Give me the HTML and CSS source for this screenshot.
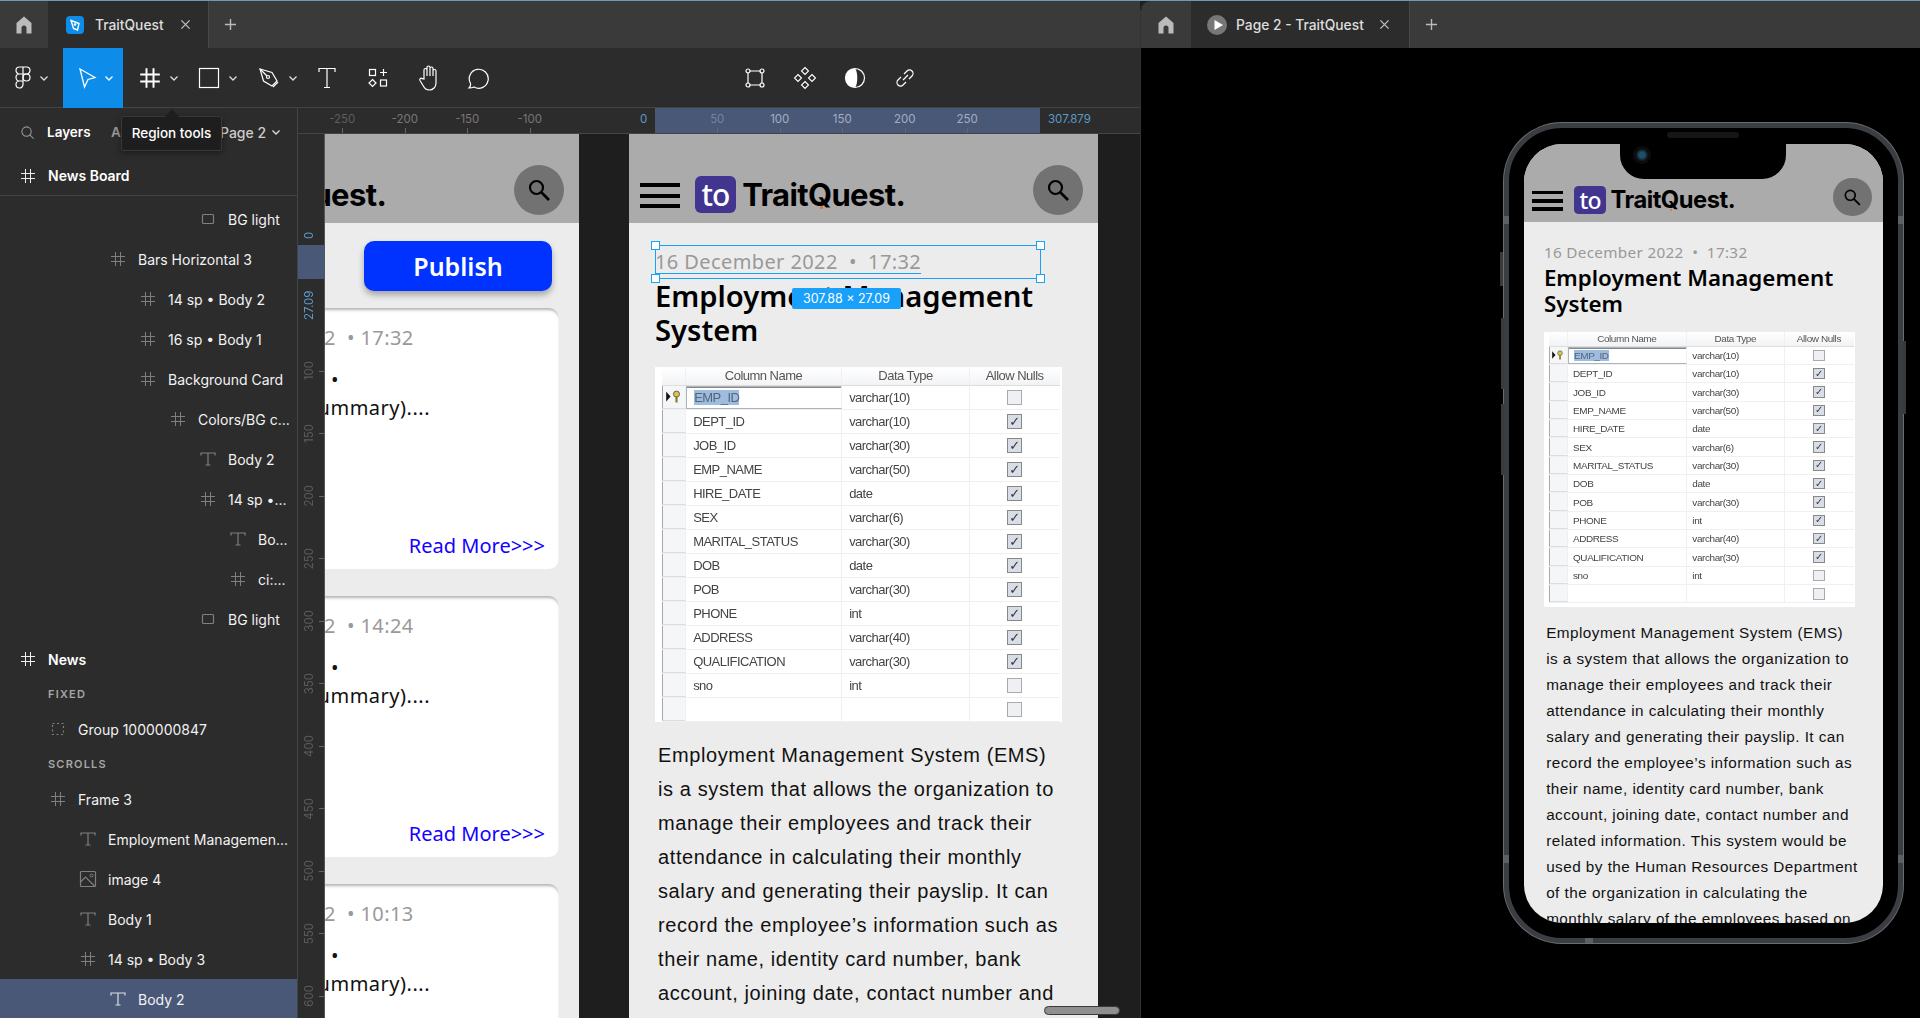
FILE: index.html
```html
<!DOCTYPE html>
<html lang="en">
<head>
  <meta charset="UTF-8" />
  <title>TraitQuest</title>
  <link rel="stylesheet" href="styles.css">
</head>
<body>
  <svg class="sprite" xmlns="http://www.w3.org/2000/svg">
    <symbol id="i-home" viewBox="0 0 20 20"><path fill="currentColor" d="M10 1.5 17.5 8v10.5h-5V13a2.5 2.5 0 0 0-5 0v5.5h-5V8z"/></symbol>
    <symbol id="i-frame" viewBox="0 0 20 20"><path fill="none" stroke="currentColor" d="M7.5 3v14M12.5 3v14M3 7.5h14M3 12.5h14"/></symbol>
    <symbol id="i-rect" viewBox="0 0 20 20"><rect x="4.5" y="5.5" width="11" height="9" rx="1" fill="none" stroke="currentColor" stroke-width="1.2"/></symbol>
    <symbol id="i-text" viewBox="0 0 20 20"><path fill="none" stroke="currentColor" stroke-width="1.2" d="M3 6.5V4h14v2.5M10 4v12M7.5 16h5"/></symbol>
    <symbol id="i-image" viewBox="0 0 20 20"><rect x="2.5" y="2.5" width="15" height="15" rx="1" fill="none" stroke="currentColor" stroke-width="1.2"/><path fill="none" stroke="currentColor" stroke-width="1.2" d="m2.5 13 5-5 9 9"/><circle cx="13.5" cy="6.5" r="1.5" fill="none" stroke="currentColor"/></symbol>
    <symbol id="i-group" viewBox="0 0 20 20"><rect x="4.5" y="4.5" width="11" height="11" fill="none" stroke="currentColor" stroke-width="1.2" stroke-dasharray="2 2.5"/></symbol>
    <symbol id="i-chev" viewBox="0 0 10 10"><path fill="none" stroke="currentColor" stroke-width="1.3" d="m1.5 3.5 3.5 3.5 3.5-3.5"/></symbol>
    <symbol id="i-close" viewBox="0 0 12 12"><path fill="none" stroke="currentColor" stroke-width="1.5" d="m1.5 1.5 9 9M10.5 1.5l-9 9"/></symbol>
    <symbol id="i-plus" viewBox="0 0 14 14"><path fill="none" stroke="currentColor" stroke-width="1.5" d="M7 1v12M1 7h12"/></symbol>
    <symbol id="i-search" viewBox="0 0 24 24"><circle cx="9.5" cy="9.5" r="6.5" fill="none" stroke="currentColor" stroke-width="2.2"/><path fill="none" stroke="currentColor" stroke-width="2.6" d="m14.5 14.5 7.5 7.5"/></symbol>
    <symbol id="i-key" viewBox="0 0 14 12"><path fill="#111" d="M0 1.5 4 6l-4 4.5z"/><circle cx="9.5" cy="3.8" r="2.8" fill="#d9c64a" stroke="#555" stroke-width=".8"/><path stroke="#8a7a20" stroke-width="2" d="M9.5 6v5.5"/></symbol>
  </svg>

  <main class="editor">
    <div class="tabbar">
      <div class="tab-home"><svg class="ic-home"><use href="#i-home"/></svg></div>
      <div class="tab tab-file">
        <span class="file-badge">
          <svg viewBox="0 0 18 18" width="18" height="18"><path fill="none" stroke="#fff" stroke-width="1.4" d="m5 4.5 8 3-1.5 6.500-4-1.500z"/><circle cx="9" cy="8.5" r="1.3" fill="#fff"/></svg>
        </span>
        <span class="tab-label">TraitQuest</span>
        <svg class="ic-close"><use href="#i-close"/></svg>
      </div>
      <svg class="ic-plus"><use href="#i-plus"/></svg>
    </div>

    <div class="toolbar">
      <div class="tool tool-menu">
        <svg width="22" height="26" viewBox="0 0 22 26" fill="none" stroke="#fff" stroke-width="1.2"><path d="M7.5 2h7a3.5 3.5 0 0 1 0 7h-7a3.5 3.5 0 0 1 0-7zM7.5 9H11v7H7.5a3.5 3.5 0 0 1 0-7zM7.5 16H11v3.5A3.5 3.5 0 1 1 7.5 16z"/><circle cx="14.5" cy="12.5" r="3.5"/><path d="M11 2v7"/></svg>
        <svg class="ic-chev"><use href="#i-chev"/></svg>
      </div>
      <div class="tool tool-select">
        <svg width="20" height="24" viewBox="0 0 20 24"><path fill="none" stroke="#fff" stroke-width="1.3" d="M3 3 18 11.5 11 13.5 7.5 21z"/></svg>
        <svg class="ic-chev"><use href="#i-chev"/></svg>
      </div>
      <div class="tool tool-frame">
        <svg width="28" height="28" class="white ic-frame-lg"><use href="#i-frame"/></svg>
        <svg class="ic-chev"><use href="#i-chev"/></svg>
      </div>
      <div class="tool tool-rect">
        <svg width="24" height="24" viewBox="0 0 24 24"><rect x="2.5" y="2.5" width="19" height="19" fill="none" stroke="#fff" stroke-width="1.2"/></svg>
        <svg class="ic-chev"><use href="#i-chev"/></svg>
      </div>
      <div class="tool tool-pen">
        <svg width="24" height="24" viewBox="0 0 24 24" fill="none" stroke="#fff" stroke-width="1.2"><path d="M3 3 15 6.5 20 15 15 20 6.5 15z"/><path d="M3 3 10 10"/><circle cx="11" cy="11" r="1.5"/><path d="m16 21 5-5"/></svg>
        <svg class="ic-chev"><use href="#i-chev"/></svg>
      </div>
      <div class="tool tool-type">
        <svg width="18" height="22" viewBox="0 0 18 22" fill="none" stroke="#fff" stroke-width="1.2"><path d="M1 5V1.5h16V5M9 1.5v19M6 20.5h6"/></svg>
      </div>
      <div class="tool tool-res">
        <svg width="22" height="24" viewBox="0 0 22 24" fill="none" stroke="#fff" stroke-width="1.2"><rect x="2.5" y="3.5" width="6" height="6"/><path d="M16.5 3v7M13 6.5h7"/><path d="m5.5 13.5 3.5 3.5-3.5 3.5L2 17z"/><rect x="13.5" y="14" width="6" height="6"/></svg>
      </div>
      <div class="tool tool-hand">
        <svg width="24" height="28" viewBox="0 0 24 28" fill="none" stroke="#fff" stroke-width="1.2"><path d="M7 15V6a1.5 1.5 0 0 1 3 0v6V3.5a1.5 1.5 0 0 1 3 0V12V4.5a1.5 1.5 0 0 1 3 0V12V7a1.5 1.5 0 0 1 3 0v12c0 4-3 7-6.5 7S8 25 6 21.5L3 16.5c-.8-1.5 1-3 2.3-1.8z"/></svg>
      </div>
      <div class="tool tool-comment">
        <svg width="24" height="24" viewBox="0 0 24 24"><path fill="none" stroke="#fff" stroke-width="1.2" d="M3 22c1.5-1.5 1.8-3 1.5-4.5A9.5 9.5 0 1 1 8 21c-1.5.8-3 1-5 1z"/></svg>
      </div>

      <div class="tool tool-bounds">
        <svg width="24" height="24" viewBox="0 0 24 24" fill="none" stroke="#fff" stroke-width="1.2"><path d="M5 6.5v11M19 6.5v11M6.5 5h11M6.5 19h11"/><circle cx="5" cy="5" r="2"/><circle cx="19" cy="5" r="2"/><circle cx="5" cy="19" r="2"/><circle cx="19" cy="19" r="2"/></svg>
      </div>
      <div class="tool tool-comp">
        <svg width="24" height="24" viewBox="0 0 24 24" fill="none" stroke="#fff" stroke-width="1.1"><path d="m12 1.5 3.5 3.5-3.5 3.5L8.5 5zM5 8.5 8.5 12 5 15.5 1.5 12zM19 8.5l3.5 3.5-3.5 3.5-3.5-3.5zM12 15.5l3.5 3.5-3.5 3.5L8.5 19z"/></svg>
      </div>
      <div class="tool tool-mask">
        <svg width="24" height="24" viewBox="0 0 24 24"><circle cx="12" cy="12" r="9.5" fill="none" stroke="#fff" stroke-width="1.2"/><path fill="#fff" d="M12 2.5a9.5 9.5 0 0 0 0 19c3-3 3-16 0-19z"/></svg>
      </div>
      <div class="tool tool-link">
        <svg width="22" height="22" viewBox="0 0 22 22" fill="none" stroke="#fff" stroke-width="1.2"><path d="m9 13 5-5M7 10l-3 3a3.5 3.5 0 0 0 5 5l3-3M15 12l3-3a3.5 3.5 0 0 0-5-5l-3 3"/></svg>
      </div>
    </div>

    <div class="workspace">
      <aside class="layers">
        <div class="panel-tabs">
          <svg class="panel-search" viewBox="0 0 16 16"><circle cx="7" cy="7" r="5" fill="none" stroke="currentColor" stroke-width="1.1"/><path stroke="currentColor" stroke-width="1.1" d="m10.5 10.5 4 4"/></svg>
          <b class="panel-tab">Layers</b>
          <span class="panel-tab panel-assets">Assets</span>
          <span class="panel-page">Page 2</span>
          <svg class="ic-chev"><use href="#i-chev"/></svg>
        </div>
        <div class="row row-pinned lvl-0 strong"><svg class="row-icon"><use href="#i-frame"/></svg>News Board</div>
        <ul class="tree">
          <li class="row lvl-6"><svg class="row-icon"><use href="#i-rect"/></svg>BG light</li>
          <li class="row lvl-3"><svg class="row-icon"><use href="#i-frame"/></svg>Bars Horizontal 3</li>
          <li class="row lvl-4"><svg class="row-icon"><use href="#i-frame"/></svg>14 sp • Body 2</li>
          <li class="row lvl-4"><svg class="row-icon"><use href="#i-frame"/></svg>16 sp • Body 1</li>
          <li class="row lvl-4"><svg class="row-icon"><use href="#i-frame"/></svg>Background Card</li>
          <li class="row lvl-5"><svg class="row-icon"><use href="#i-frame"/></svg>Colors/BG c...</li>
          <li class="row lvl-6"><svg class="row-icon"><use href="#i-text"/></svg>Body 2</li>
          <li class="row lvl-6"><svg class="row-icon"><use href="#i-frame"/></svg>14 sp •...</li>
          <li class="row lvl-7"><svg class="row-icon"><use href="#i-text"/></svg>Bo...</li>
          <li class="row lvl-7"><svg class="row-icon"><use href="#i-frame"/></svg>ci:...</li>
          <li class="row lvl-6"><svg class="row-icon"><use href="#i-rect"/></svg>BG light</li>
          <li class="row lvl-0 strong"><svg class="row-icon"><use href="#i-frame"/></svg>News</li>
          <li class="tree-head">FIXED</li>
          <li class="row lvl-1"><svg class="row-icon"><use href="#i-group"/></svg>Group 1000000847</li>
          <li class="tree-head">SCROLLS</li>
          <li class="row lvl-1"><svg class="row-icon"><use href="#i-frame"/></svg>Frame 3</li>
          <li class="row lvl-2"><svg class="row-icon"><use href="#i-text"/></svg>Employment Managemen...</li>
          <li class="row lvl-2"><svg class="row-icon"><use href="#i-image"/></svg>image 4</li>
          <li class="row lvl-2"><svg class="row-icon"><use href="#i-text"/></svg>Body 1</li>
          <li class="row lvl-2"><svg class="row-icon"><use href="#i-frame"/></svg>14 sp • Body 3</li>
          <li class="row lvl-3 selected"><svg class="row-icon"><use href="#i-text"/></svg>Body 2</li>
        </ul>
        <div class="tooltip">Region tools</div>
      </aside>

      <section class="stage">
        <div class="ruler-top">
          <span class="ruler-span"></span>
          <span class="ruler-start">0</span>
          <span class="ruler-end">307.879</span>
          <div class="tick-row">
            <span class="tick dim">-250</span><span class="tick">-200</span><span class="tick">-150</span><span class="tick">-100</span><span class="tick"></span><span class="tick"></span>
            <span class="tick on-span faint">50</span><span class="tick on-span">100</span><span class="tick on-span">150</span><span class="tick on-span">200</span><span class="tick on-span">250</span>
          </div>
        </div>
        <div class="stage-body">
          <div class="ruler-left">
            <span class="ruler-span-v"></span>
            <span class="v-start">0</span>
            <span class="v-end">27.09</span>
            <div class="tick-col">
              <span class="vtick"><i>100</i></span><span class="vtick"><i>150</i></span><span class="vtick"><i>200</i></span><span class="vtick"><i>250</i></span><span class="vtick"><i>300</i></span><span class="vtick"><i>350</i></span><span class="vtick"><i>400</i></span><span class="vtick"><i>450</i></span><span class="vtick"><i>500</i></span><span class="vtick"><i>550</i></span><span class="vtick"><i>600</i></span>
            </div>
          </div>

          <div class="canvas">
            <!-- News Board frame -->
            <div class="news frame-board">
              <header class="news-head">
                <span class="burger"><i></i><i></i><i></i></span>
                <span class="logo"><b>to</b></span>
                <span class="wordmark">TraitQuest.</span>
                <span class="search-btn"><svg><use href="#i-search"/></svg></span>
              </header>
              <div class="board">
                <button class="publish">Publish</button>
                <article class="card">
                  <p class="card-date">16 December 2022 &nbsp;•&nbsp;17:32</p>
                  <p class="card-line">Employee System •</p>
                  <p class="card-line card-sum">(Short summary)....</p>
                  <a class="read-more">Read More&gt;&gt;&gt;</a>
                </article>
                <article class="card">
                  <p class="card-date">16 December 2022 &nbsp;•&nbsp;14:24</p>
                  <p class="card-line">Employee System •</p>
                  <p class="card-line card-sum">(Short summary)....</p>
                  <a class="read-more">Read More&gt;&gt;&gt;</a>
                </article>
                <article class="card">
                  <p class="card-date">16 December 2022 &nbsp;•&nbsp;10:13</p>
                  <p class="card-line">Employee System •</p>
                  <p class="card-line card-sum">(Short summary)....</p>
                  <a class="read-more">Read More&gt;&gt;&gt;</a>
                </article>
              </div>
            </div>

            <!-- News frame -->
            <div class="news frame-news">
              <header class="news-head">
                <span class="burger"><i></i><i></i><i></i></span>
                <span class="logo"><b>to</b></span>
                <span class="wordmark">TraitQuest.</span>
                <span class="search-btn"><svg><use href="#i-search"/></svg></span>
              </header>
              <div class="article">
                <p class="date"><span class="hovered">16 December 2022 &nbsp;•&nbsp; 17:32</span></p>
                <h1 class="title">Employment Management System</h1>
                <div class="shot">
                  <div class="shot-row shot-head"><span></span><span class="c-name">Column Name</span><span class="c-type">Data Type</span><span class="c-null">Allow Nulls</span></div>
                  <div class="shot-row"><span class="gutter"><svg class="key"><use href="#i-key"/></svg></span><span class="c-name active"><mark>EMP_ID</mark></span><span>varchar(10)</span><span class="c-null"><i class="ck"></i></span></div>
                  <div class="shot-row"><span class="gutter"></span><span class="c-name">DEPT_ID</span><span>varchar(10)</span><span class="c-null"><i class="ck on"></i></span></div>
                  <div class="shot-row"><span class="gutter"></span><span class="c-name">JOB_ID</span><span>varchar(30)</span><span class="c-null"><i class="ck on"></i></span></div>
                  <div class="shot-row"><span class="gutter"></span><span class="c-name">EMP_NAME</span><span>varchar(50)</span><span class="c-null"><i class="ck on"></i></span></div>
                  <div class="shot-row"><span class="gutter"></span><span class="c-name">HIRE_DATE</span><span>date</span><span class="c-null"><i class="ck on"></i></span></div>
                  <div class="shot-row"><span class="gutter"></span><span class="c-name">SEX</span><span>varchar(6)</span><span class="c-null"><i class="ck on"></i></span></div>
                  <div class="shot-row"><span class="gutter"></span><span class="c-name">MARITAL_STATUS</span><span>varchar(30)</span><span class="c-null"><i class="ck on"></i></span></div>
                  <div class="shot-row"><span class="gutter"></span><span class="c-name">DOB</span><span>date</span><span class="c-null"><i class="ck on"></i></span></div>
                  <div class="shot-row"><span class="gutter"></span><span class="c-name">POB</span><span>varchar(30)</span><span class="c-null"><i class="ck on"></i></span></div>
                  <div class="shot-row"><span class="gutter"></span><span class="c-name">PHONE</span><span>int</span><span class="c-null"><i class="ck on"></i></span></div>
                  <div class="shot-row"><span class="gutter"></span><span class="c-name">ADDRESS</span><span>varchar(40)</span><span class="c-null"><i class="ck on"></i></span></div>
                  <div class="shot-row"><span class="gutter"></span><span class="c-name">QUALIFICATION</span><span>varchar(30)</span><span class="c-null"><i class="ck on"></i></span></div>
                  <div class="shot-row"><span class="gutter"></span><span class="c-name">sno</span><span>int</span><span class="c-null"><i class="ck"></i></span></div>
                  <div class="shot-row"><span class="gutter"></span><span class="c-name"></span><span></span><span class="c-null"><i class="ck"></i></span></div>
                </div>
                <p class="copy">Employment Management System (EMS) is a system that allows the organization to manage their employees and track their attendance in calculating their monthly salary and generating their payslip. It can record the employee’s information such as their name, identity card number, bank account, joining date, contact number and related information. This system would be used by the Human Resources Department of the organization in calculating the monthly salary of the employees based on their attendance.</p>
              </div>
            </div>

            <!-- selection on the canvas -->
            <div class="selection">
              <i class="handle tl"></i><i class="handle tr"></i><i class="handle bl"></i><i class="handle br"></i>
              <span class="size-tag">307.88 × 27.09</span>
            </div>
            <div class="scroll-thumb"></div>
          </div>
        </div>
      </section>
    </div>
  </main>

  <main class="preview">
    <div class="tabbar">
      <div class="tab-home"><svg class="ic-home"><use href="#i-home"/></svg></div>
      <div class="tab tab-proto">
        <span class="play"><svg viewBox="0 0 10 10" width="10" height="10"><path fill="#fff" d="M1.5 0 10 5l-8.5 5z"/></svg></span>
        <span class="tab-label">Page 2 - TraitQuest</span>
        <svg class="ic-close"><use href="#i-close"/></svg>
      </div>
      <svg class="ic-plus"><use href="#i-plus"/></svg>
    </div>

    <div class="preview-body">
      <div class="phone">
        <i class="side-btn s1"></i><i class="side-btn s2"></i><i class="side-btn s3"></i><i class="side-btn s4"></i>
        <i class="band b1"></i><i class="band b2"></i><i class="band b3"></i><i class="band b4"></i><i class="band b5"></i>
        <i class="speaker"></i>
        <div class="screen">
          <div class="notch"><i class="camera"></i></div>
          <div class="news in-phone">
            <header class="news-head">
              <span class="burger"><i></i><i></i><i></i></span>
              <span class="logo"><b>to</b></span>
              <span class="wordmark">TraitQuest.</span>
              <span class="search-btn"><svg><use href="#i-search"/></svg></span>
            </header>
            <div class="article">
              <p class="date">16 December 2022 &nbsp;•&nbsp; 17:32</p>
              <h1 class="title">Employment Management System</h1>
              <div class="shot">
                <div class="shot-row shot-head"><span></span><span class="c-name">Column Name</span><span class="c-type">Data Type</span><span class="c-null">Allow Nulls</span></div>
                <div class="shot-row"><span class="gutter"><svg class="key"><use href="#i-key"/></svg></span><span class="c-name active"><mark>EMP_ID</mark></span><span>varchar(10)</span><span class="c-null"><i class="ck"></i></span></div>
                <div class="shot-row"><span class="gutter"></span><span class="c-name">DEPT_ID</span><span>varchar(10)</span><span class="c-null"><i class="ck on"></i></span></div>
                <div class="shot-row"><span class="gutter"></span><span class="c-name">JOB_ID</span><span>varchar(30)</span><span class="c-null"><i class="ck on"></i></span></div>
                <div class="shot-row"><span class="gutter"></span><span class="c-name">EMP_NAME</span><span>varchar(50)</span><span class="c-null"><i class="ck on"></i></span></div>
                <div class="shot-row"><span class="gutter"></span><span class="c-name">HIRE_DATE</span><span>date</span><span class="c-null"><i class="ck on"></i></span></div>
                <div class="shot-row"><span class="gutter"></span><span class="c-name">SEX</span><span>varchar(6)</span><span class="c-null"><i class="ck on"></i></span></div>
                <div class="shot-row"><span class="gutter"></span><span class="c-name">MARITAL_STATUS</span><span>varchar(30)</span><span class="c-null"><i class="ck on"></i></span></div>
                <div class="shot-row"><span class="gutter"></span><span class="c-name">DOB</span><span>date</span><span class="c-null"><i class="ck on"></i></span></div>
                <div class="shot-row"><span class="gutter"></span><span class="c-name">POB</span><span>varchar(30)</span><span class="c-null"><i class="ck on"></i></span></div>
                <div class="shot-row"><span class="gutter"></span><span class="c-name">PHONE</span><span>int</span><span class="c-null"><i class="ck on"></i></span></div>
                <div class="shot-row"><span class="gutter"></span><span class="c-name">ADDRESS</span><span>varchar(40)</span><span class="c-null"><i class="ck on"></i></span></div>
                <div class="shot-row"><span class="gutter"></span><span class="c-name">QUALIFICATION</span><span>varchar(30)</span><span class="c-null"><i class="ck on"></i></span></div>
                <div class="shot-row"><span class="gutter"></span><span class="c-name">sno</span><span>int</span><span class="c-null"><i class="ck"></i></span></div>
                <div class="shot-row"><span class="gutter"></span><span class="c-name"></span><span></span><span class="c-null"><i class="ck"></i></span></div>
              </div>
              <p class="copy">Employment Management System (EMS) is a system that allows the organization to manage their employees and track their attendance in calculating their monthly salary and generating their payslip. It can record the employee’s information such as their name, identity card number, bank account, joining date, contact number and related information. This system would be used by the Human Resources Department of the organization in calculating the monthly salary of the employees based on their attendance.</p>
            </div>
          </div>
        </div>
      </div>
    </div>
  </main>
</body>
</html>
```

FILE: styles.css
```css
:root {
  --ui-bg: #2c2c2c;
  --tab-bg: #3a3a3a;
  --line: #444;
  --accent: #0d8ce9;
  --figma-blue: #18a0fb;
  --ruler-span: #4a5878;
  --ruler-blue: #5a9bc8;
  --canvas: #1e1e1e;
  --head-grey: #ababab;
  --page-grey: #ececec;
}

* {
  box-sizing: border-box;
}

html, body {
  height: 100%;
}

body {
  margin: 0;
  display: flex;
  overflow: hidden;
  background: var(--canvas);
  border-top: 1px solid #6a9db5;
  font-family: Inter, 'Liberation Sans', sans-serif;
  font-size: 14px;
  color: #fff;
}

.sprite {
  display: none;
}

p, h1, ul {
  margin: 0;
  padding: 0;
  list-style: none;
}

/* ----- Tabs ----- */
.tabbar {
  display: flex;
  align-items: center;
  height: 47px;
  flex: none;
  background: var(--tab-bg);
}

.tab-home {
  width: 49px;
  height: 100%;
  display: flex;
  align-items: center;
  justify-content: center;
  color: #bbb;
  border-right: 1px solid #2c2c2c;
}

.ic-home {
  width: 20px;
  height: 20px;
}

.tab {
  height: 100%;
  display: flex;
  align-items: center;
  background: var(--ui-bg);
  color: #ddd;
  font-weight: 500;
  font-size: 13.8px;
}

.tab-file {
  width: 160px;
  padding-left: 17px;
  border-right: 1px solid #484848;
}

.file-badge {
  width: 18px;
  height: 18px;
  border-radius: 4px;
  background: var(--accent);
  margin-right: 11px;
}

.tab-file .ic-close {
  margin-left: 16px;
}

.tab-proto {
  width: 218px;
  padding-left: 15px;
  border-right: 1px solid #484848;
}

.tab-proto .ic-close {
  margin-left: 15px;
}

.play {
  width: 20px;
  height: 20px;
  border-radius: 50%;
  background: #777;
  display: flex;
  align-items: center;
  justify-content: center;
  margin-right: 9px;
  padding-left: 1px;
}

.ic-close {
  width: 11px;
  height: 11px;
  color: #bbb;
}

.ic-plus {
  width: 13px;
  height: 13px;
  margin-left: 15px;
  color: #bbb;
}

/* ----- Left window ----- */
.editor {
  width: 1140px;
  flex: none;
  display: flex;
  flex-direction: column;
  height: 100%;
  overflow: hidden;
}

.toolbar {
  height: 60px;
  flex: none;
  display: flex;
  background: var(--ui-bg);
  border-bottom: 1px solid var(--line);
}

.tool {
  display: flex;
  align-items: center;
  justify-content: center;
  gap: 7px;
  height: 60px;
}

.white {
  color: #fff;
}

.ic-chev {
  width: 10px;
  height: 10px;
  color: #ddd;
}

.tool-menu { width: 63px; padding-right: 3px; gap: 5px; }
.tool-select { width: 60px; background: var(--accent); padding-left: 5px; }
.tool-select .ic-chev { color: #fff; }
.tool-frame { width: 65px; padding-left: 13px; justify-content: flex-start; gap: 5px; }
.ic-frame-lg { stroke-width: 1.4; }
.tool-rect { width: 52px; padding-left: 9px; justify-content: flex-start; }
.tool-pen { width: 62px; padding-left: 17px; justify-content: flex-start; }
.tool-type { width: 50px; }
.tool-res { width: 52px; }
.tool-hand { width: 49px; }
.tool-comment { width: 50px; }
.tool-bounds { width: 50px; margin-left: 227px; }
.tool-comp { width: 50px; }
.tool-mask { width: 50px; }
.tool-link { width: 50px; }

.workspace {
  flex: 1;
  display: flex;
  min-height: 0;
}

/* ----- Layers ----- */
.layers {
  width: 298px;
  flex: none;
  position: relative;
  background: var(--ui-bg);
  border-right: 1px solid var(--line);
  overflow: hidden;
  font-size: 14px;
  font-weight: 400;
}

.panel-tabs {
  height: 48px;
  display: flex;
  align-items: center;
  padding-left: 20px;
  color: #aaa;
}

.panel-search {
  width: 15px;
  height: 15px;
  color: #999;
  margin-right: 12px;
}

.panel-tab {
  width: 64px;
  font-size: 13.5px;
  font-weight: 600;
  color: #fff;
}

.panel-assets {
  width: 109px;
  color: #999;
}

.panel-page {
  font-weight: 500;
  color: #ccc;
  margin-right: 5px;
}

.row {
  height: 40px;
  display: flex;
  align-items: center;
  white-space: nowrap;
  color: #f2f2f2;
}

.row-icon {
  width: 20px;
  height: 20px;
  margin-right: 10px;
  flex: none;
  color: #7f7f7f;
}

.strong {
  font-weight: 600;
  color: #fff;
}

.strong .row-icon {
  color: #eee;
}

.row-pinned {
  border-bottom: 1px solid var(--line);
  margin-bottom: 3px;
}

.lvl-0 { padding-left: 18px; }
.lvl-1 { padding-left: 48px; }
.lvl-2 { padding-left: 78px; }
.lvl-3 { padding-left: 108px; }
.lvl-4 { padding-left: 138px; }
.lvl-5 { padding-left: 168px; }
.lvl-6 { padding-left: 198px; }
.lvl-7 { padding-left: 228px; }

.tree-head {
  height: 30px;
  padding-left: 48px;
  display: flex;
  align-items: center;
  font-size: 11px;
  font-weight: 600;
  letter-spacing: 1.2px;
  color: #a5a5a5;
}

.selected {
  background: var(--ruler-span);
}

.selected .row-icon {
  color: #ddd;
}

.tooltip {
  position: absolute;
  left: 121px;
  top: 8px;
  width: 101px;
  height: 35px;
  line-height: 33px;
  text-align: center;
  background: #1e1e1e;
  border: 1px solid #383838;
  border-radius: 2px;
  font-size: 13.5px;
  font-weight: 500;
  box-shadow: 0 2px 6px rgba(0, 0, 0, 0.4);
}

.tooltip::before {
  content: "";
  position: absolute;
  left: 43px;
  top: -8px;
  border: 7px solid transparent;
  border-top: 0;
  border-bottom: 8px solid #1e1e1e;
}

/* ----- Rulers ----- */
.stage {
  flex: 1;
  min-width: 0;
  display: flex;
  flex-direction: column;
}

.ruler-top {
  height: 26px;
  flex: none;
  position: relative;
  background: var(--ui-bg);
  border-bottom: 1px solid var(--line);
}

.ruler-span {
  position: absolute;
  left: 357px;
  top: 0;
  width: 385px;
  height: 25px;
  background: var(--ruler-span);
}

.ruler-start, .ruler-end {
  position: absolute;
  top: 4px;
  font-size: 11.5px;
  color: var(--ruler-blue);
}

.ruler-start { left: 342px; }
.ruler-end { left: 750px; }

.tick-row {
  position: relative;
  display: flex;
  padding-left: 13px;
}

.tick {
  width: 62.5px;
  height: 25px;
  padding-top: 4px;
  text-align: center;
  font-size: 11.5px;
  color: #777;
  position: relative;
}

.tick::after {
  content: "";
  position: absolute;
  left: 31px;
  bottom: 0;
  width: 1px;
  height: 5px;
  background: #666;
}

.tick:empty::after {
  display: none;
}

.tick.dim { color: #5e5e5e; }
.tick.on-span { color: #a3adc0; }
.tick.faint { color: #76829b; }

.stage-body {
  flex: 1;
  display: flex;
  min-height: 0;
}

.ruler-left {
  width: 27px;
  flex: none;
  position: relative;
  background: var(--ui-bg);
  border-right: 1px solid #555;
  overflow: hidden;
}

.ruler-span-v {
  position: absolute;
  left: 0;
  top: 111px;
  width: 26px;
  height: 34px;
  background: var(--ruler-span);
}

.v-start, .v-end {
  position: absolute;
  left: 3px;
  width: 16px;
  font-size: 11.5px;
  color: var(--ruler-blue);
  writing-mode: vertical-rl;
  transform: rotate(180deg);
  display: flex;
  align-items: center;
  justify-content: center;
  white-space: nowrap;
}

.v-start { top: 95px; height: 12px; }
.v-end { top: 150px; height: 42px; }

.tick-col {
  position: relative;
  padding-top: 205.75px;
}

.vtick {
  display: flex;
  align-items: center;
  height: 62.5px;
  padding-left: 3px;
  position: relative;
}

.vtick i {
  font-style: normal;
  font-size: 11.5px;
  color: #5c5c5c;
  writing-mode: vertical-rl;
  transform: rotate(180deg);
  width: 16px;
  display: flex;
  align-items: center;
  justify-content: center;
}

.vtick::after {
  content: "";
  position: absolute;
  right: 0;
  top: 31px;
  width: 5px;
  height: 1px;
  background: #666;
}

/* ----- Canvas ----- */
.canvas {
  flex: 1;
  position: relative;
  overflow: hidden;
  background: var(--canvas);
}

.frame-board {
  position: absolute;
  left: -215px;
  top: 0;
  width: 469px;
  height: 900px;
}

.frame-news {
  position: absolute;
  left: 304px;
  top: 0;
  width: 469px;
  height: 900px;
}

.selection {
  position: absolute;
  left: 330px;
  top: 111px;
  width: 386px;
  height: 34px;
  border: 1.5px solid var(--figma-blue);
}

.handle {
  position: absolute;
  width: 9px;
  height: 9px;
  background: #fff;
  border: 1.5px solid var(--figma-blue);
}

.tl { left: -5px; top: -5px; }
.tr { right: -5px; top: -5px; }
.bl { left: -5px; bottom: -5px; }
.br { right: -5px; bottom: -5px; }

.size-tag {
  position: absolute;
  left: 136px;
  top: 42px;
  width: 109px;
  height: 21px;
  line-height: 21px;
  text-align: center;
  white-space: nowrap;
  border-radius: 2px;
  background: var(--figma-blue);
  color: #fff;
  font-size: 12.5px;
}

.scroll-thumb {
  position: absolute;
  left: 719px;
  top: 872px;
  width: 76px;
  height: 9px;
  border-radius: 5px;
  background: #8f8f8f;
  border: 1px solid #3a3a3a;
}

/* ----- TraitQuest page, 1em = 20px on the canvas ----- */
.news {
  font-size: 20px;
  background: var(--page-grey);
  color: #000;
}

.news-head {
  height: 89px;
  display: flex;
  align-items: flex-end;
  padding: 0 0.75em 0.4em 0.55em;
  background: var(--head-grey);
}

.burger {
  width: 2em;
  height: 1.25em;
  margin-bottom: 0.35em;
  display: flex;
  flex-direction: column;
  justify-content: space-between;
}

.burger i {
  height: 0.2em;
  background: #000;
}

.logo {
  width: 2.05em;
  height: 1.85em;
  margin: 0 0 0.1em 0.75em;
  border-radius: 0.3em;
  background: #41358f;
  color: #fff;
  display: flex;
  justify-content: center;
  align-items: center;
}

.logo b {
  font-family: 'Noto Sans', sans-serif;
  font-size: 1.5em;
  font-weight: 500;
  letter-spacing: -0.03em;
  line-height: 1;
}

.wordmark {
  position: relative;
  margin: 0 0 0.06em 0.2em;
  font-size: 1.55em;
  line-height: 1.2;
  font-weight: 700;
  letter-spacing: -0.02em;
}

/* the small orange dot under the Q */
.wordmark::after {
  content: "";
  position: absolute;
  left: 2.5em;
  bottom: 0.13em;
  width: 0.11em;
  height: 0.11em;
  border-radius: 50%;
  background: #f26a1b;
}

.search-btn {
  width: 2.5em;
  height: 2.5em;
  margin-left: auto;
  border-radius: 50%;
  background: #727272;
  color: #000;
  display: flex;
  align-items: center;
  justify-content: center;
}

.search-btn svg {
  width: 1.2em;
  height: 1.2em;
}

.article {
  padding: 1.1em 0 0 1.3em;
}

.date {
  height: 1.7em;
  line-height: 1.7em;
  color: #999;
  letter-spacing: 0.02em;
  font-family: 'Noto Sans', sans-serif;
  white-space: nowrap;
}

.hovered {
  display: inline-block;
  height: 1.45em;
  border-bottom: 1.5px solid var(--figma-blue);
}

.title {
  font-family: 'Noto Sans', sans-serif;
  font-size: 1.46em;
  line-height: 1.164;
  font-weight: 600;
  max-width: 14em;
}

/* the picture of the table designer */
.shot {
  width: 20.35em;
  margin-top: 1em;
  padding: 0 0.1em 0 0.35em;
  background: #fff;
  font-family: 'Liberation Sans', sans-serif;
  color: #444;
  filter: blur(0.5px);
}

.in-phone .shot {
  padding-bottom: 4px;
}

.shot-row {
  font-size: 0.65em;
  height: 1.846em;
  display: grid;
  grid-template-columns: 1.846em 12em 9.85em 6.85em;
  align-items: center;
  letter-spacing: -0.04em;
  border-bottom: 1px solid #f0f0f0;
}

.shot-row > span {
  height: 100%;
  display: flex;
  align-items: center;
  padding-left: 0.55em;
  border-right: 1px solid #f0f0f0;
}

.shot-head {
  height: 1.462em;
  background: linear-gradient(#fff, #f2f3f5);
  border-bottom: 1px solid #dedede;
  color: #555;
}

.shot-head > span {
  justify-content: center;
  padding-left: 0;
}

.gutter {
  background: #f5f6f7;
  border-bottom: 1px solid #ddd;
  border-left: 1px solid #aaa;
}

.shot-row > .gutter {
  padding-left: 0.2em;
}

.key {
  width: 1.2em;
  height: 1em;
}

.active {
  border: 1px solid #a9b4bd;
  box-shadow: inset 0 1px 0 #888;
}

.active mark {
  background: #9dbce0;
  color: #567;
}

.shot-row > .c-null {
  justify-content: center;
  padding-left: 0;
  border-right: 0;
}

.ck {
  width: 1.15em;
  height: 1.15em;
  border: 1px solid #aaa;
  background: #eef0f3;
  display: flex;
  align-items: center;
  justify-content: center;
  font-style: normal;
  line-height: 1;
  color: #334;
}

.ck.on {
  background: #d9dde6;
  border-color: #888;
}

.ck.on::after {
  content: "✓";
  font-family: 'DejaVu Sans', sans-serif;
}

.copy {
  width: 20.5em;
  margin: 0.8em 0 0 0.15em;
  font-family: 'Liberation Sans', Arial, sans-serif;
  line-height: 1.7em;
  letter-spacing: 0.03em;
  color: #111;
}

/* ----- News Board list ----- */
.board {
  display: flex;
  flex-direction: column;
  height: 811px;
}

.publish {
  flex: none;
  align-self: flex-end;
  width: 188px;
  height: 50px;
  margin: 18px 27px 0 0;
  border: 0;
  border-radius: 10px;
  background: #0033ff;
  color: #fff;
  font-family: 'Noto Sans', sans-serif;
  font-weight: 600;
  font-size: 25px;
  box-shadow: 0 4px 6px rgba(0, 0, 0, 0.3);
}

.card {
  flex: none;
  width: 422px;
  height: 261px;
  margin: 17px 0 10px 27px;
  padding: 16px 14px 10px 16px;
  display: flex;
  flex-direction: column;
  background: #fff;
  border-radius: 10px;
  box-shadow: inset 0 3px 3px -1px rgba(0, 0, 0, 0.3);
}

.card-date {
  height: 27px;
  line-height: 27px;
  color: #999;
  font-family: 'Noto Sans', sans-serif;
  font-size: 20px;
  letter-spacing: 0.4px;
  white-space: nowrap;
  margin-bottom: 15px;
}

.card-line {
  width: 180px;
  text-align: right;
  line-height: 28px;
  font-family: 'Noto Sans', sans-serif;
  font-size: 20px;
  letter-spacing: 0.5px;
  white-space: nowrap;
  color: #111;
}

.card-sum {
  width: 277px;
}

.read-more {
  margin-top: auto;
  align-self: flex-end;
  line-height: 27px;
  font-family: 'Noto Sans', sans-serif;
  font-size: 20px;
  color: #1400ff;
}

/* ----- Right window ----- */
.preview {
  flex: 1;
  min-width: 0;
  display: flex;
  flex-direction: column;
  height: 100%;
  background: #000;
  border-left: 1px solid #333;
  border-radius: 10px 0 0 0;
  overflow: hidden;
}

.preview .tab-home {
  width: 51px;
}

.preview-body {
  flex: 1;
  position: relative;
}

.phone {
  position: absolute;
  left: 363px;
  top: 75px;
  width: 399px;
  height: 820px;
  padding: 16px 15px 15px;
  background: #000;
  border: 5px solid #3a3d41;
  border-radius: 58px;
  box-shadow: 0 0 0 1px #6c6c6c;
}

.side-btn {
  position: absolute;
  width: 3px;
  background: #3a3a3a;
}

.s1 { left: -9px; top: 124px; height: 34px; }
.s2 { left: -8px; top: 190px; height: 71px; }
.s3 { left: -8px; top: 276px; height: 71px; }
.s4 { right: -8px; top: 213px; height: 73px; }

/* antenna bands on the rim */
.band {
  position: absolute;
  background: #5c5f63;
}

.b1 { left: -5px; top: 88px; width: 5px; height: 8px; }
.b2 { right: -5px; top: 88px; width: 5px; height: 8px; }
.b3 { left: -5px; top: 727px; width: 5px; height: 8px; }
.b4 { right: -5px; top: 727px; width: 5px; height: 8px; }
.b5 { left: 76px; bottom: -5px; width: 8px; height: 5px; }

.speaker {
  position: absolute;
  left: 158px;
  top: 4px;
  width: 72px;
  height: 6px;
  border-radius: 3px;
  background: #161616;
}

.screen {
  position: relative;
  width: 100%;
  height: 100%;
  border-radius: 38px;
  overflow: hidden;
  background: var(--page-grey);
}

.notch {
  position: absolute;
  left: 96px;
  top: 0;
  width: 166px;
  height: 35px;
  background: #000;
  border-radius: 0 0 24px 24px;
}

.camera {
  position: absolute;
  left: 13px;
  top: 2px;
  width: 18px;
  height: 18px;
  border-radius: 50%;
  background: radial-gradient(circle, #1f4f6a 0 22%, #0c0c0c 50%);
}

.in-phone {
  font-size: 15.3px;
}

.in-phone .news-head {
  height: 78px;
}
```
